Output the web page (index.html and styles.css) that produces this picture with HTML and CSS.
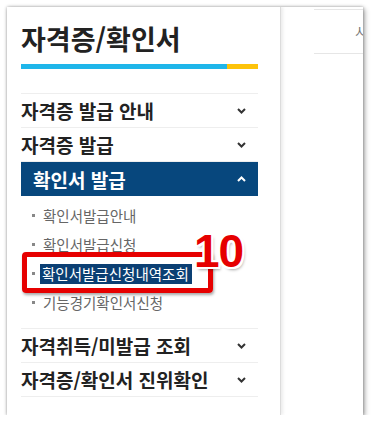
FILE: index.html
```html
<!DOCTYPE html>
<html lang="ko">
  <head>
    <meta charset="UTF-8" />
    <title>자격증/확인서</title>
    <link rel="stylesheet" href="styles.css">
  </head>
  <body>
    <div class="frame">
      <div class="lnb">
        <h2 class="lnb-title">자격증/확인서</h2>
        <div class="title-bar"><span class="blue"></span><span class="yellow"></span></div>

        <ul class="menu">
          <li class="menu-item">
            <span>자격증 발급 안내</span>
            <svg class="chev" width="9" height="6" viewBox="0 0 9 6"><polyline points="1,1 4.5,4.5 8,1" /></svg>
          </li>
          <li class="menu-item">
            <span>자격증 발급</span>
            <svg class="chev" width="9" height="6" viewBox="0 0 9 6"><polyline points="1,1 4.5,4.5 8,1" /></svg>
          </li>
          <li class="menu-item active">
            <span>확인서 발급</span>
            <svg class="chev" width="9" height="6" viewBox="0 0 9 6"><polyline points="1,5 4.5,1.5 8,5" /></svg>
          </li>
          <li class="sub">
            <ul class="sub-list">
              <li>확인서발급안내</li>
              <li>확인서발급신청</li>
              <li class="current"><span class="sel">확인서발급신청내역조회</span></li>
              <li>기능경기확인서신청</li>
            </ul>
          </li>
          <li class="menu-item">
            <span>자격취득/미발급 조회</span>
            <svg class="chev" width="9" height="6" viewBox="0 0 9 6"><polyline points="1,1 4.5,4.5 8,1" /></svg>
          </li>
          <li class="menu-item">
            <span>자격증/확인서 진위확인</span>
            <svg class="chev" width="9" height="6" viewBox="0 0 9 6"><polyline points="1,1 4.5,4.5 8,1" /></svg>
          </li>
        </ul>

        <div class="mark-box"></div>
        <div class="mark-num">10</div>
      </div>

      <div class="content">
        <div class="search-box">시</div>
      </div>
    </div>
  </body>
</html>
```

FILE: styles.css
```css
body {
  margin: 0;
  background: #fff;
  font-family: "Noto Sans CJK KR", "Noto Sans", sans-serif;
  color: #222;
}
.frame {
  position: relative;
  display: flex;
  margin: 7px 0 0 7px;
  width: 356px;
  height: 408px;
  background: #fff;
  overflow: hidden;
  box-shadow: 0 0 3px rgba(0, 0, 0, 0.35), 2px 2px 5px rgba(0, 0, 0, 0.3);
}
.lnb {
  position: relative;
  flex-shrink: 0;
  width: 237px;
  padding: 0 22px 0 14px;
  border-right: 1px solid #dcdcdc;
  box-shadow: 2px 0 3px rgba(0, 0, 0, 0.08);
}
.lnb-title {
  margin: 0;
  padding-top: 14px;
  height: 43px;
  font-size: 27px;
  font-weight: bold;
  line-height: 36px;
  color: #222;
}
.title-bar {
  display: flex;
  height: 5px;
}
.title-bar .blue {
  width: 206px;
  background: #1fb6ea;
}
.title-bar .yellow {
  flex: 1;
  background: #fdc30a;
}
.menu {
  list-style: none;
  margin: 24px 0 0;
  padding: 0;
  border-top: 1px solid #eee;
}
.menu-item {
  display: flex;
  align-items: center;
  justify-content: space-between;
  height: 33px;
  border-bottom: 1px solid #eee;
  font-size: 19px;
  font-weight: bold;
  color: #222;
}
.chev {
  margin-right: 12px;
  fill: none;
  stroke: #333;
  stroke-width: 2;
}
.menu-item.active {
  height: 34px;
  padding-left: 12px;
  background: #07477d;
  color: #fff;
  border-bottom: none;
}
.menu-item.active .chev {
  stroke: #fff;
}
.sub {
  padding: 5px 0 11px;
  border-bottom: 1px solid #eee;
}
.sub-list {
  list-style: none;
  margin: 0;
  padding: 0;
}
.sub-list li {
  position: relative;
  height: 29px;
  line-height: 29px;
  padding-left: 22px;
  font-size: 14.5px;
  color: #666;
}
.sub-list li::before {
  content: "";
  position: absolute;
  left: 11px;
  top: 13px;
  width: 3px;
  height: 3px;
  background: #888;
}
.sub-list .sel {
  display: inline-block;
  margin-left: -3px;
  padding: 0 3px 0 2px;
  line-height: 20px;
  background: #0b3f73;
  color: #fff;
}
.mark-box {
  position: absolute;
  left: 15px;
  top: 245px;
  width: 181px;
  height: 31px;
  border: 5px solid #e60000;
  border-radius: 4px;
  box-shadow: 1px 2px 3px rgba(0, 0, 0, 0.35);
}
.mark-num {
  position: absolute;
  left: 187px;
  top: 218px;
  font-family: "Liberation Sans", Arial, sans-serif;
  font-size: 46px;
  font-weight: bold;
  line-height: 52px;
  color: #e60000;
  letter-spacing: -1px;
  text-shadow: -2px 0 #fff, 2px 0 #fff, 0 -2px #fff, 0 2px #fff,
    -2px -2px #fff, 2px -2px #fff, -2px 2px #fff, 2px 2px #fff,
    2px 3px 3px rgba(0, 0, 0, 0.35);
}
.content {
  flex: 1;
  min-width: 0;
  padding: 2px 0 0 33px;
}
.search-box {
  height: 43px;
  border-top: 1px solid #e6e6e6;
  border-bottom: 1px solid #e6e6e6;
  padding-left: 41px;
  font-size: 14px;
  line-height: 43px;
  color: #777;
  white-space: nowrap;
}
```
